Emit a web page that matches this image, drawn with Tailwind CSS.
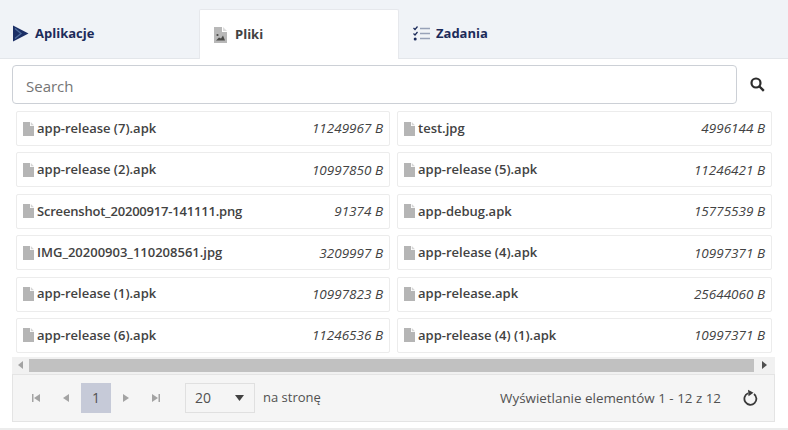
<!DOCTYPE html>
<html lang="pl">
<head>
    <meta charset="UTF-8">
    <title>Pliki</title>
    <script src="https://cdn.jsdelivr.net/npm/@tailwindcss/browser@4"></script>
</head>
<body class="bg-white font-['Open_Sans',sans-serif] text-[#424242] overflow-hidden">
<div class="w-[788px] h-[430px] flex flex-col">
    <!-- zakladki -->
    <div class="h-[59px] bg-[#f0f3f7] border-b border-[#e3e6ea] flex items-end shrink-0">
        <div class="w-[199px] h-[49px] flex items-center pl-[12px] gap-[6px] text-[13px] font-bold text-[#1c2b5a]">
            <svg width="17" height="17" viewBox="0 0 17 17"><path d="M1 0.500 L16.500 8.500 L1 16.500Z" fill="#1c2f66"/><path d="M3 3.500 L9 8.500 L3 13.500" fill="none" stroke="#4f6c9c" stroke-width="1.300"/></svg>
            Aplikacje
        </div>
        <div class="w-[200px] h-[50px] -mb-px bg-white border border-b-0 border-[#e6e8ec] rounded-t-[2px] flex items-center pl-[14px] gap-[8px] text-[13px] font-bold text-[#424242]">
            <svg width="13" height="16" viewBox="0 0 13 16"><path d="M0 0 H8 V5 H13 V16 H0Z" fill="#b8b8b8"/><path d="M9 0 L13 4 H9Z" fill="#dcdcdc"/><path d="M2 13.500 L5 10.500 L7 11.500 L9 8.500 L11 13.500Z" fill="#4a4a48"/><circle cx="3.500" cy="8" r="1.100" fill="#4a4a48"/></svg>
            Pliki
        </div>
        <div class="h-[49px] flex items-center pl-[14px] gap-[6px] text-[13px] font-bold text-[#1c2b5a]">
            <svg width="17" height="15" viewBox="0 0 17 15"><path d="M0.500 2 L2 3.500 L4.500 0.500 M0.500 7.500 L2 9 L4.500 6" fill="none" stroke="#1c2b5a" stroke-width="1.200"/><circle cx="2.200" cy="13" r="1.500" fill="#1c2b5a"/><path d="M7 2.500 H17 M7 7.500 H17 M7 12.500 H17" stroke="#98a2b8" stroke-width="1.600"/></svg>
            Zadania
        </div>
    </div>

    <div class="flex-1 flex flex-col pl-[12px] pr-[13px] border-b-2 border-[#ececec]">
        <!-- wyszukiwarka -->
        <div class="flex items-center mt-[6px] h-[39px] shrink-0">
            <input type="text" placeholder="Search" class="w-[725px] h-[39px] px-[13px] pt-[2px] bg-white border border-[#ccd0d6] rounded-[4px] text-[15px] text-[#424242] placeholder:text-[#757575] outline-none">
            <svg class="ml-[13px]" width="15" height="15" viewBox="0 0 15 15"><circle cx="6" cy="6" r="4.500" fill="none" stroke="#2c2c2c" stroke-width="2.200"/><path d="M9.500 9.500 L13.800 13.800" stroke="#2c2c2c" stroke-width="2.400"/></svg>
        </div>

        <!-- lista plikow -->
        <div class="grid grid-cols-[374px_375px] gap-x-[7px] ml-[4px] mt-[7px] w-[756px] gap-y-[6.400px] shrink-0">
            <div class="flex items-center border border-[#ececec] rounded-[2px] pl-[6px] pr-[6px] text-[13px] h-[35px]"><svg width="11" height="14" viewBox="0 0 11 14"><path d="M0 0 H7 V4 H11 V14 H0Z" fill="#b5b5b5"/><path d="M7.800 0 L11 3.200 H7.800Z" fill="#d6d6d6"/></svg><span class="ml-[3px] font-semibold">app-release (7).apk</span><span class="ml-auto italic text-[13.500px]">11249967 B</span></div>
            <div class="flex items-center border border-[#ececec] rounded-[2px] pl-[6px] pr-[6px] text-[13px] h-[35px]"><svg width="11" height="14" viewBox="0 0 11 14"><path d="M0 0 H7 V4 H11 V14 H0Z" fill="#b5b5b5"/><path d="M7.800 0 L11 3.200 H7.800Z" fill="#d6d6d6"/></svg><span class="ml-[3px] font-semibold">test.jpg</span><span class="ml-auto italic text-[13.500px]">4996144 B</span></div>
            <div class="flex items-center border border-[#ececec] rounded-[2px] pl-[6px] pr-[6px] text-[13px] h-[35px]"><svg width="11" height="14" viewBox="0 0 11 14"><path d="M0 0 H7 V4 H11 V14 H0Z" fill="#b5b5b5"/><path d="M7.800 0 L11 3.200 H7.800Z" fill="#d6d6d6"/></svg><span class="ml-[3px] font-semibold">app-release (2).apk</span><span class="ml-auto italic text-[13.500px]">10997850 B</span></div>
            <div class="flex items-center border border-[#ececec] rounded-[2px] pl-[6px] pr-[6px] text-[13px] h-[35px]"><svg width="11" height="14" viewBox="0 0 11 14"><path d="M0 0 H7 V4 H11 V14 H0Z" fill="#b5b5b5"/><path d="M7.800 0 L11 3.200 H7.800Z" fill="#d6d6d6"/></svg><span class="ml-[3px] font-semibold">app-release (5).apk</span><span class="ml-auto italic text-[13.500px]">11246421 B</span></div>
            <div class="flex items-center border border-[#ececec] rounded-[2px] pl-[6px] pr-[6px] text-[13px] h-[35px]"><svg width="11" height="14" viewBox="0 0 11 14"><path d="M0 0 H7 V4 H11 V14 H0Z" fill="#b5b5b5"/><path d="M7.800 0 L11 3.200 H7.800Z" fill="#d6d6d6"/></svg><span class="ml-[3px] font-semibold tracking-[-0.200px]">Screenshot_20200917-141111.png</span><span class="ml-auto italic text-[13.500px]">91374 B</span></div>
            <div class="flex items-center border border-[#ececec] rounded-[2px] pl-[6px] pr-[6px] text-[13px] h-[35px]"><svg width="11" height="14" viewBox="0 0 11 14"><path d="M0 0 H7 V4 H11 V14 H0Z" fill="#b5b5b5"/><path d="M7.800 0 L11 3.200 H7.800Z" fill="#d6d6d6"/></svg><span class="ml-[3px] font-semibold">app-debug.apk</span><span class="ml-auto italic text-[13.500px]">15775539 B</span></div>
            <div class="flex items-center border border-[#ececec] rounded-[2px] pl-[6px] pr-[6px] text-[13px] h-[35px]"><svg width="11" height="14" viewBox="0 0 11 14"><path d="M0 0 H7 V4 H11 V14 H0Z" fill="#b5b5b5"/><path d="M7.800 0 L11 3.200 H7.800Z" fill="#d6d6d6"/></svg><span class="ml-[3px] font-semibold">IMG_20200903_110208561.jpg</span><span class="ml-auto italic text-[13.500px]">3209997 B</span></div>
            <div class="flex items-center border border-[#ececec] rounded-[2px] pl-[6px] pr-[6px] text-[13px] h-[35px]"><svg width="11" height="14" viewBox="0 0 11 14"><path d="M0 0 H7 V4 H11 V14 H0Z" fill="#b5b5b5"/><path d="M7.800 0 L11 3.200 H7.800Z" fill="#d6d6d6"/></svg><span class="ml-[3px] font-semibold">app-release (4).apk</span><span class="ml-auto italic text-[13.500px]">10997371 B</span></div>
            <div class="flex items-center border border-[#ececec] rounded-[2px] pl-[6px] pr-[6px] text-[13px] h-[35px]"><svg width="11" height="14" viewBox="0 0 11 14"><path d="M0 0 H7 V4 H11 V14 H0Z" fill="#b5b5b5"/><path d="M7.800 0 L11 3.200 H7.800Z" fill="#d6d6d6"/></svg><span class="ml-[3px] font-semibold">app-release (1).apk</span><span class="ml-auto italic text-[13.500px]">10997823 B</span></div>
            <div class="flex items-center border border-[#ececec] rounded-[2px] pl-[6px] pr-[6px] text-[13px] h-[35px]"><svg width="11" height="14" viewBox="0 0 11 14"><path d="M0 0 H7 V4 H11 V14 H0Z" fill="#b5b5b5"/><path d="M7.800 0 L11 3.200 H7.800Z" fill="#d6d6d6"/></svg><span class="ml-[3px] font-semibold">app-release.apk</span><span class="ml-auto italic text-[13.500px]">25644060 B</span></div>
            <div class="flex items-center border border-[#ececec] rounded-[2px] pl-[6px] pr-[6px] text-[13px] h-[35px]"><svg width="11" height="14" viewBox="0 0 11 14"><path d="M0 0 H7 V4 H11 V14 H0Z" fill="#b5b5b5"/><path d="M7.800 0 L11 3.200 H7.800Z" fill="#d6d6d6"/></svg><span class="ml-[3px] font-semibold">app-release (6).apk</span><span class="ml-auto italic text-[13.500px]">11246536 B</span></div>
            <div class="flex items-center border border-[#ececec] rounded-[2px] pl-[6px] pr-[6px] text-[13px] h-[35px]"><svg width="11" height="14" viewBox="0 0 11 14"><path d="M0 0 H7 V4 H11 V14 H0Z" fill="#b5b5b5"/><path d="M7.800 0 L11 3.200 H7.800Z" fill="#d6d6d6"/></svg><span class="ml-[3px] font-semibold">app-release (4) (1).apk</span><span class="ml-auto italic text-[13.500px]">10997371 B</span></div>
        </div>

        <!-- pasek przewijania -->
        <div class="h-[17px] mt-[4px] bg-[#f1f1f1] flex items-center shrink-0">
            <div class="w-[17px] flex justify-center"><svg width="5" height="8" viewBox="0 0 5 8"><path d="M5 0 V8 L0 4Z" fill="#a3a3a3"/></svg></div>
            <div class="w-[725px] h-[13px] bg-[#c1c1c1]"></div>
            <div class="flex-1 flex justify-center"><svg width="5" height="8" viewBox="0 0 5 8"><path d="M0 0 V8 L5 4Z" fill="#505050"/></svg></div>
        </div>

        <!-- stopka -->
        <div class="h-[48px] bg-[#f5f5f5] border border-[#e4e4e4] flex items-center text-[13px] text-[#515151] shrink-0">
            <div class="w-[30px] ml-[8px] flex justify-center"><svg width="8" height="8" viewBox="0 0 8 8"><path d="M0 0 H1.500 V8 H0Z M8 0 V8 L2 4Z" fill="#a3a3a3"/></svg></div>
            <div class="w-[30px] flex justify-center"><svg width="6" height="8" viewBox="0 0 6 8"><path d="M6 0 V8 L0 4Z" fill="#a3a3a3"/></svg></div>
            <div class="w-[30px] h-[30px] bg-[#c6cad8] flex items-center justify-center text-[14px]">1</div>
            <div class="w-[30px] flex justify-center"><svg width="6" height="8" viewBox="0 0 6 8"><path d="M0 0 V8 L6 4Z" fill="#a3a3a3"/></svg></div>
            <div class="w-[30px] flex justify-center"><svg width="8" height="8" viewBox="0 0 8 8"><path d="M0 0 V8 L6 4Z M6.500 0 H8 V8 H6.500Z" fill="#a3a3a3"/></svg></div>
            <div class="w-[70px] h-[30px] ml-[14px] border border-[#e0e0e0] flex items-center pl-[9px] pr-[10px] text-[14px]">20<svg class="ml-auto" width="9" height="6" viewBox="0 0 9 6"><path d="M0 0 H9 L4.500 6Z" fill="#424242"/></svg></div>
            <span class="ml-[8px]">na stronę</span>
            <span class="ml-auto text-[13.400px]">Wyświetlanie elementów 1 - 12 z 12</span>
            <svg class="ml-[22px] mr-[16px]" width="15" height="17" viewBox="0 0 15 17"><path d="M5 4.300 A6 6 0 1 0 11 5" fill="none" stroke="#3a3a3a" stroke-width="1.800"/><path d="M5 0.800 L10.500 3.800 L5.500 7.200Z" fill="#3a3a3a"/></svg>
        </div>
    </div>
</div>
</body>
</html>
